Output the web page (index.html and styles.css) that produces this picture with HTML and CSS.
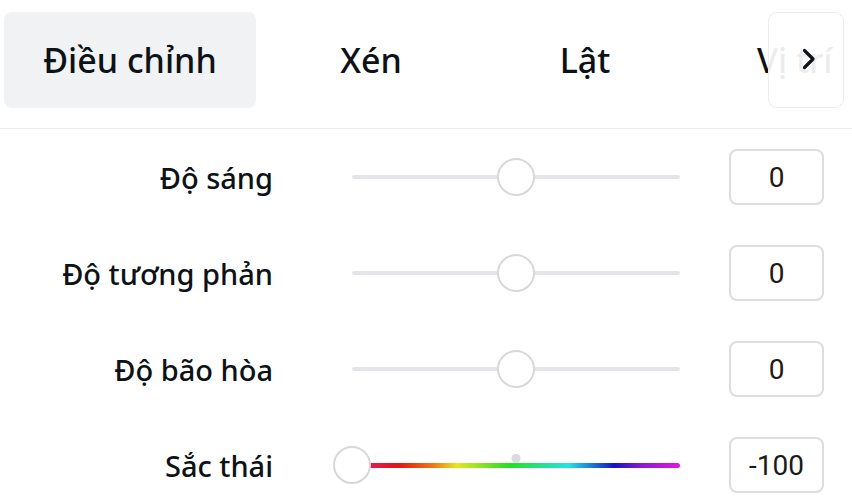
FILE: index.html
```html
<!DOCTYPE html>
<html lang="vi">
<head>
<meta charset="utf-8">
<title>Điều chỉnh</title>
<link rel="stylesheet" href="styles.css">
</head>
<body>
<div class="panel">
  <div class="tabbar">
    <div class="tabs">
      <div class="tab tab-active">Điều chỉnh</div>
      <div class="tab">Xén</div>
      <div class="tab">Lật</div>
      <div class="tab tab-last">Vị trí</div>
    </div>
    <button class="scroll-btn" aria-label="Tiếp">
      <svg width="16" height="24" viewBox="0 0 16 24"><path d="M3.5 3.5 L12 12 L3.5 20.5" fill="none" stroke="#0d1216" stroke-width="3.2" stroke-linecap="round" stroke-linejoin="round"/></svg>
    </button>
  </div>
  <div class="rows">
    <div class="row">
      <div class="label">Độ sáng</div>
      <div class="slider"><div class="track"></div><div class="thumb" style="left:50%"></div></div>
      <div class="value">0</div>
    </div>
    <div class="row">
      <div class="label">Độ tương phản</div>
      <div class="slider"><div class="track"></div><div class="thumb" style="left:50%"></div></div>
      <div class="value">0</div>
    </div>
    <div class="row">
      <div class="label">Độ bão hòa</div>
      <div class="slider"><div class="track"></div><div class="thumb" style="left:50%"></div></div>
      <div class="value">0</div>
    </div>
    <div class="row">
      <div class="label">Sắc thái</div>
      <div class="slider"><div class="track track-hue"></div><div class="mid-dot"></div><div class="thumb" style="left:0%"></div></div>
      <div class="value">-100</div>
    </div>
  </div>
</div>
</body>
</html>
```
FILE: styles.css
```css
* { box-sizing: border-box; }
html, body { margin: 0; padding: 0; background: #fff; }
body {
  font-family: "Noto Sans", "Open Sans", sans-serif;
  color: #0d1216;
  width: 852px;
  height: 500px;
  overflow: hidden;
}
.tabbar {
  position: relative;
  height: 129px;
  padding: 12px 0 20px 4px;
  border-bottom: 1px solid #ececec;
  overflow: hidden;
}
.tabs {
  display: flex;
  height: 96px;
}
.tab {
  flex: 0 0 214px;
  height: 96px;
  display: flex;
  align-items: center;
  justify-content: center;
  font-size: 34px;
  font-weight: 500;
  white-space: nowrap;
  border-radius: 8px;
}
.tab-active {
  flex-basis: 252px;
  margin-right: 8px;
  background: #f1f2f4;
}
.tab-last {
  justify-content: flex-start;
  padding-left: 65px;
}
.scroll-btn {
  position: absolute;
  left: 768px;
  top: 12px;
  width: 76px;
  height: 96px;
  padding: 0;
  background: rgba(255, 255, 255, 0.92);
  border: 1.5px solid #ededed;
  border-radius: 9px;
  display: flex;
  align-items: center;
  justify-content: center;
}
.scroll-btn svg { margin-left: 6px; margin-top: -2px; }
.row {
  display: flex;
  align-items: center;
  height: 96px;
}
.label {
  width: 273px;
  text-align: right;
  font-size: 29px;
  font-weight: 500;
  white-space: nowrap;
  margin-right: 79px;
}
.slider {
  position: relative;
  width: 328px;
  height: 40px;
  display: flex;
  align-items: center;
  margin-right: 49px;
}
.track {
  width: 100%;
  height: 4px;
  border-radius: 2px;
  background: #e3e5e8;
}
.track-hue {
  height: 5px;
  border-radius: 3px;
  background: linear-gradient(to right,
    #e8207a 0%, #e01414 14%, #f07a12 25%, #e6e620 32%,
    #22e022 48%, #22e4e4 66%, #1414c4 80%, #8a18d0 88%, #e418e0 100%);
}
.thumb {
  position: absolute;
  top: 50%;
  width: 38px;
  height: 38px;
  border-radius: 50%;
  background: #fff;
  border: 2px solid #d6d8db;
  transform: translate(-50%, -50%);
}
.mid-dot {
  position: absolute;
  left: 50%;
  top: 9px;
  width: 9px;
  height: 9px;
  border-radius: 50%;
  background: #d9dbde;
  transform: translateX(-50%);
}
.value {
  width: 95px;
  height: 56px;
  border: 2px solid #dcdddf;
  border-radius: 8px;
  display: flex;
  align-items: center;
  justify-content: center;
  font-family: Roboto, "Liberation Sans", sans-serif;
  font-size: 28px;
  color: #1a1a1a;
}
```
